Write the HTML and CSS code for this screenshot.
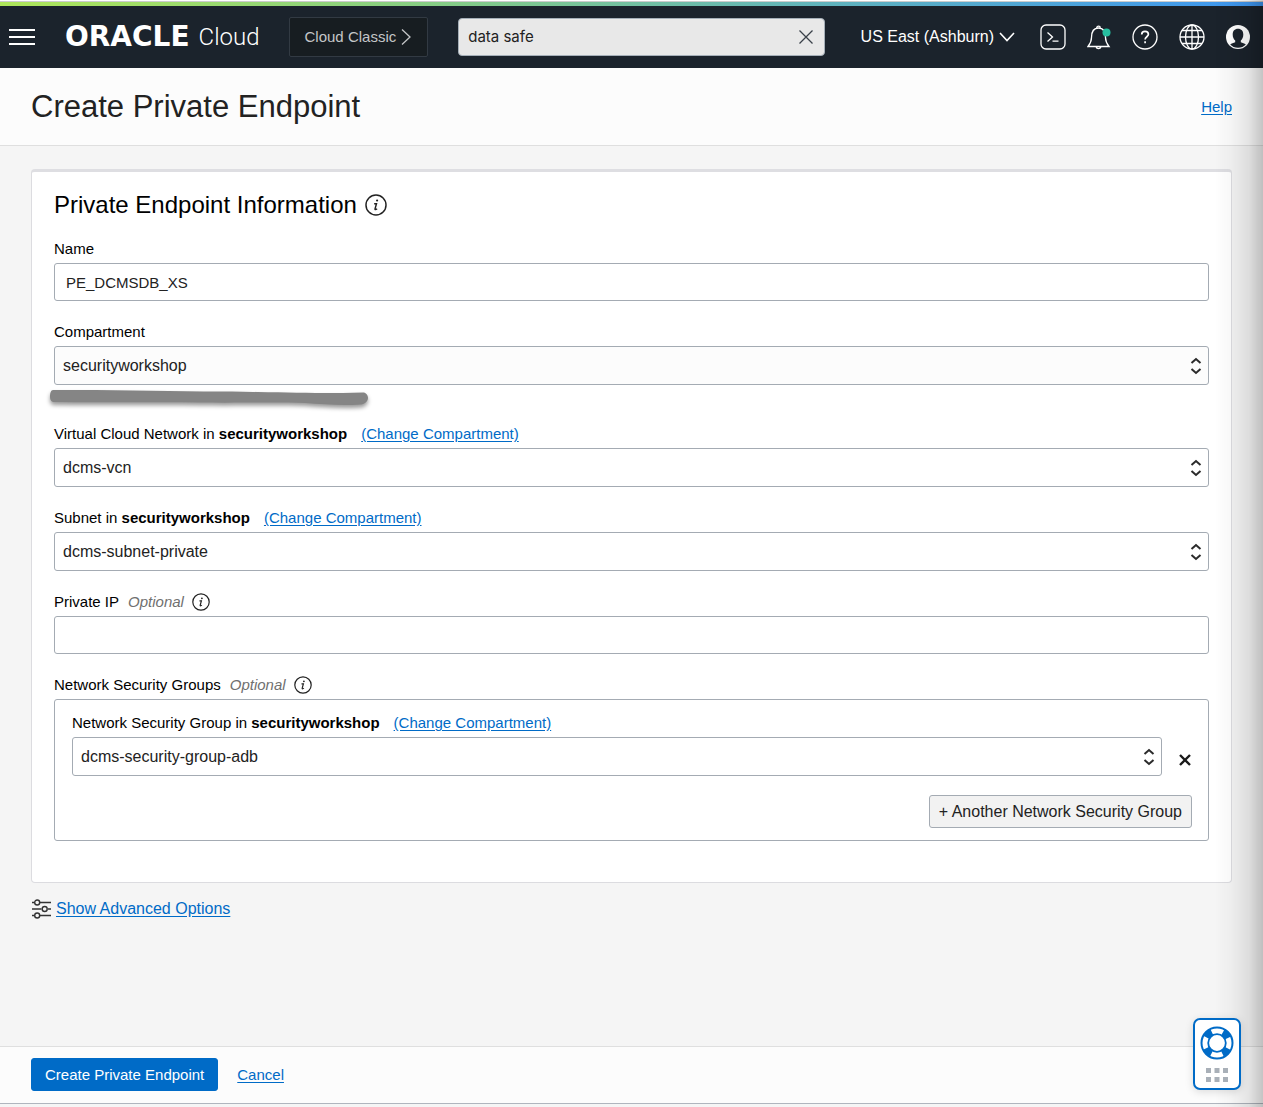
FILE: index.html
```html
<!DOCTYPE html>
<html lang="en">
<head>
<meta charset="utf-8">
<title>Create Private Endpoint</title>
<link rel="stylesheet" href="styles.css">
</head>
<body>
<header class="topbar">
  <button class="icon-btn menu" aria-label="Menu">
    <svg width="26" height="16" viewBox="0 0 26 16" stroke="#fff" stroke-width="2"><path d="M0 1h26M0 8h26M0 15h26"/></svg>
  </button>
  <a class="brand" href="#"><span class="brand-name">ORACLE</span><span class="brand-product">Cloud</span></a>
  <button class="classic">Cloud Classic
    <svg width="10" height="18" viewBox="0 0 10 18" fill="none" stroke="currentColor" stroke-width="1.3"><path d="M1 1.500L9 9l-8 7.500"/></svg>
  </button>
  <div class="search">
    <input class="search-input" type="text" value="data safe" aria-label="Search">
    <button class="icon-btn" aria-label="Clear search">
      <svg width="16" height="16" viewBox="0 0 16 16" stroke="#3a4149" stroke-width="1.300"><path d="M1.500 1.500l13 13M14.500 1.500l-13 13"/></svg>
    </button>
  </div>
  <button class="region">US East (Ashburn)
    <svg width="16" height="10" viewBox="0 0 16 10" fill="none" stroke="#fff" stroke-width="1.600"><path d="M1 1l7 7.500L15 1"/></svg>
  </button>
  <nav class="tools" aria-label="Tools">
    <button class="icon-btn" aria-label="Cloud Shell">
      <svg width="26" height="26" viewBox="0 0 26 26" fill="none" stroke="#fff" stroke-width="1.300"><rect x="1" y="1" width="24" height="24" rx="5"/><path d="M7.500 8.500l5 4.500-5 4.500M12.500 17.200h6"/></svg>
    </button>
    <button class="icon-btn" aria-label="Notifications">
      <svg width="24" height="26" viewBox="0 0 24 26" fill="none" stroke="#fff" stroke-width="1.300"><path d="M1 22.500c2-2.500 3.500-5 3.500-9 0-6 2.500-9.500 7-9.500s7 3.500 7 9.500c0 4 1.500 6.500 3.500 9zM9.700 4a1.800 1.800 0 1 1 3.600 0M9 22.700a2.600 2.600 0 0 0 5 0"/><circle cx="19.500" cy="8.500" r="4" fill="#27bfa0" stroke="none"/></svg>
    </button>
    <button class="icon-btn" aria-label="Help menu">
      <svg width="26" height="26" viewBox="0 0 26 26" fill="none" stroke="#fff"><circle cx="13" cy="13" r="12" stroke-width="1.300"/><path stroke-width="1.700" d="M9.700 10.500c0-2 1.300-3.200 3.300-3.200s3.400 1.200 3.400 3c0 2.400-3.300 2.500-3.300 5.200M13.100 17.300v1.900"/></svg>
    </button>
    <button class="icon-btn" aria-label="Language">
      <svg width="26" height="26" viewBox="0 0 26 26" fill="none" stroke="#fff" stroke-width="1.300"><circle cx="13" cy="13" r="12"/><ellipse cx="13" cy="13" rx="6.500" ry="12"/><path d="M13 1v24M1 13h24M3 6.500h20M3 19.500h20"/></svg>
    </button>
    <button class="icon-btn" aria-label="Profile">
      <svg width="24" height="24" viewBox="0 0 24 24"><circle cx="12" cy="12" r="12" fill="#fff"/><path fill="#1b232c" d="M12 3.800c-3.300 0-5.300 2.200-5.300 5.700 0 2.700 1 4.800 2.500 6v1.700c-1.700.6-3.700 1.200-5 2.300C6 21.500 8.800 22.800 12 22.800s6-1.300 7.800-3.300c-1.300-1.100-3.300-1.700-5-2.300v-1.700c1.500-1.200 2.500-3.300 2.500-6 0-3.500-2-5.700-5.300-5.700z"/></svg>
    </button>
  </nav>
</header>

<div class="page-head">
  <h1 class="page-title">Create Private Endpoint</h1>
  <a class="link" href="#">Help</a>
</div>

<main class="content">
  <form class="card" id="endpoint-form">
    <h2 class="card-title">Private Endpoint Information
      <svg width="22" height="22" viewBox="0 0 18 18" fill="none"><use href="#info"/></svg>
    </h2>

    <div class="field">
      <div class="label-row"><label for="name">Name</label></div>
      <input class="control" id="name" type="text" value="PE_DCMSDB_XS">
    </div>

    <div class="field">
      <div class="label-row"><label for="compartment">Compartment</label></div>
      <div class="select">
        <select class="control tinted" id="compartment"><option>securityworkshop</option></select>
        <svg class="arrows" width="12" height="18" viewBox="0 0 12 18"><use href="#arrows"/></svg>
      </div>
      <svg class="scribble" width="318" height="17" viewBox="0 0 318 17" aria-hidden="true">
        <path fill="#858585" d="M3 0C60-.5 120 1 170 1.500c60 .5 90 2.500 143 1 3 0 5 2.500 5 5.500s-3 6-7 6.500c-22 1.500-38-.5-56-1.500-26-1-70 0-105-.5-50-.5-95 0-145-.5-4 0-5-2-5-6 0-3 1-6 3-6z"/>
      </svg>
    </div>

    <div class="field">
      <div class="label-row"><label for="vcn">Virtual Cloud Network in <b>securityworkshop</b></label><a class="link change" href="#">(Change Compartment)</a></div>
      <div class="select">
        <select class="control" id="vcn"><option>dcms-vcn</option></select>
        <svg class="arrows" width="12" height="18" viewBox="0 0 12 18"><use href="#arrows"/></svg>
      </div>
    </div>

    <div class="field">
      <div class="label-row"><label for="subnet">Subnet in <b>securityworkshop</b></label><a class="link change" href="#">(Change Compartment)</a></div>
      <div class="select">
        <select class="control" id="subnet"><option>dcms-subnet-private</option></select>
        <svg class="arrows" width="12" height="18" viewBox="0 0 12 18"><use href="#arrows"/></svg>
      </div>
    </div>

    <div class="field">
      <div class="label-row"><label for="ip">Private IP</label><i class="optional">Optional</i>
        <svg width="18" height="18" viewBox="0 0 18 18" fill="none"><use href="#info"/></svg></div>
      <input class="control" id="ip" type="text">
    </div>

    <div class="field" role="group" aria-labelledby="groups-label">
      <div class="label-row"><span id="groups-label">Network Security Groups</span><i class="optional">Optional</i>
        <svg width="18" height="18" viewBox="0 0 18 18" fill="none"><use href="#info"/></svg></div>
      <div class="group-box">
        <div class="label-row"><label for="nsg">Network Security Group in <b>securityworkshop</b></label><a class="link change" href="#">(Change Compartment)</a></div>
        <div class="group-row">
          <div class="select">
            <select class="control" id="nsg"><option>dcms-security-group-adb</option></select>
            <svg class="arrows" width="12" height="18" viewBox="0 0 12 18"><use href="#arrows"/></svg>
          </div>
          <button class="icon-btn remove" type="button" aria-label="Remove group">
            <svg width="12" height="12" viewBox="0 0 12 12" stroke="#1a1a1a" stroke-width="2.400"><path d="M1 1l10 10M11 1L1 11"/></svg>
          </button>
        </div>
        <button class="btn add" type="button">+ Another Network Security Group</button>
      </div>
    </div>
  </form>

  <div class="advanced">
    <svg width="20" height="20" viewBox="0 0 20 20" fill="none" stroke="#333" stroke-width="1.400"><path d="M1 3.500h2.500M9 3.500h11M1 10h9.500M17 10h3M1 16.500h2.500M9 16.500h11"/><circle cx="6.200" cy="3.500" r="2.500"/><circle cx="13.700" cy="10" r="2.500"/><circle cx="6.200" cy="16.500" r="2.500"/></svg>
    <a class="link" href="#">Show Advanced Options</a>
  </div>
</main>

<footer class="actions">
  <button class="btn primary" form="endpoint-form">Create Private Endpoint</button>
  <a class="link" href="#">Cancel</a>
</footer>

<div class="edge-shade"></div>

<button class="support" aria-label="Support">
  <svg width="34" height="34" viewBox="0 0 34 34" fill="none">
    <circle cx="17" cy="17" r="12" stroke="#fff" stroke-width="7"/>
    <circle cx="17" cy="17" r="12" stroke="#006bc7" stroke-width="7" stroke-dasharray="7.540 11.310" stroke-dashoffset="-5.650"/>
    <circle cx="17" cy="17" r="15.500" stroke="#006bc7" stroke-width="2"/>
    <circle cx="17" cy="17" r="8.800" stroke="#006bc7" stroke-width="1.800"/>
  </svg>
  <svg width="22" height="14" viewBox="0 0 22 14" fill="#a9b0b8"><path d="M0 0h5v5H0zM8.500 0h5v5h-5zM17 0h5v5h-5zM0 9h5v5H0zM8.500 9h5v5h-5zM17 9h5v5h-5z"/></svg>
</button>

<svg class="defs" width="0" height="0" aria-hidden="true">
  <defs>
    <g id="info" fill="none" stroke="#222" stroke-width="1.200"><circle cx="9" cy="9" r="8.200"/><path d="M7.500 7.900h1.900L8.200 12.200c-.2.800.6.800 1.700-.1"/><circle cx="9.900" cy="5.300" r=".9" fill="#222" stroke="none"/></g>
    <g id="arrows" fill="none" stroke="#2b2b2b" stroke-width="2"><path d="M1.500 6L6 2l4.500 4M1.500 12L6 16l4.500-4"/></g>
  </defs>
</svg>
</body>
</html>
```
FILE: styles.css
```css
* { box-sizing: border-box; }

body {
  margin: 0;
  min-height: 100vh;
  display: flex;
  flex-direction: column;
  background: #f5f5f5;
  color: #000;
  font: 15px/20px "Liberation Sans", Arial, sans-serif;
}

button, input, select { font: inherit; color: inherit; }
button { cursor: pointer; }
svg { display: block; flex: none; }
.defs { position: absolute; }

.link { color: #006bc7; text-decoration: underline; text-underline-offset: 2px; }

.icon-btn {
  display: flex;
  padding: 0;
  border: 0;
  background: none;
}

/* Top bar */
.topbar {
  display: flex;
  align-items: center;
  height: 68px;
  padding: 6px 13px 0 9px;
  color: #fff;
  background:
    linear-gradient(#fff 0 1px, #ccc 1px 2px) top / 100% 2px no-repeat,
    linear-gradient(90deg, #aee65a, #86cd84 34%, #5fb2bd 66%, #3d96f2) top / 100% 6px no-repeat,
    #1b232c;
}
.brand {
  display: flex;
  align-items: center;
  gap: 9px;
  margin: 0 29px 0 30px;
  color: #fff;
  text-decoration: none;
}
.brand-name { font: bold 28px/32px "DejaVu Sans", sans-serif; }
.brand-product { font: 300 24px/32px Roboto, sans-serif; }
.classic {
  display: flex;
  align-items: center;
  gap: 5px;
  height: 40px;
  padding: 0 16px 0 15px;
  border: 1px solid #323a43;
  border-radius: 2px;
  background: #171d21;
  color: #c4c6c8;
  white-space: nowrap;
}
.search {
  display: flex;
  align-items: center;
  flex: 1;
  min-width: 0;
  height: 38px;
  margin: 0 36px 0 30px;
  padding: 0 10px 0 9px;
  border: 1px solid #a5afb8;
  border-radius: 4px;
  background: #e8e8e8;
}
.search-input {
  flex: 1;
  min-width: 0;
  padding: 0;
  border: 0;
  background: none;
  color: #222;
  font-family: Inter, sans-serif;
}
.region {
  display: flex;
  align-items: center;
  gap: 5px;
  padding: 0;
  border: 0;
  background: none;
  font-size: 16px;
  white-space: nowrap;
}
.tools {
  display: flex;
  align-items: center;
  gap: 21px;
  margin-left: 25px;
}

/* Page heading */
.page-head {
  display: flex;
  align-items: center;
  justify-content: space-between;
  padding: 19px 31px 18px;
  border-bottom: 1px solid #dfdfdf;
  background: #fcfcfc;
}
.page-title { margin: 0; font-size: 31px; line-height: 40px; font-weight: 400; color: #222; }

/* Form card */
.content { flex: 1; padding: 23px 31px 31px; }
.card {
  padding: 18px 22px 41px;
  border: 1px solid #dcdce0;
  border-top: 3px solid #dedee2;
  border-radius: 4px;
  background: #fff;
}
.card-title {
  display: flex;
  align-items: center;
  gap: 8px;
  margin: 0 0 19px;
  font-size: 24px;
  line-height: 30px;
  font-weight: 400;
}
.field + .field { margin-top: 21px; }
.label-row {
  display: flex;
  align-items: center;
  height: 20px;
  margin-bottom: 4px;
}
.optional { margin: 0 8px 0 9px; color: #707070; }
.change { margin-left: 14px; }
.control {
  display: block;
  width: 100%;
  height: 38px;
  padding: 0 11px;
  border: 1px solid #a4abb3;
  border-radius: 3px;
  background: #fff;
  color: #222;
  appearance: none;
}
.tinted { background: #fcfcfc; }
.select { display: grid; align-items: center; flex: 1; }
.select > * { grid-area: 1 / 1; }
.select .control { height: 39px; padding: 0 30px 0 8px; font-size: 16px; }
.select .tinted { background: #fcfcfc; }
.arrows { justify-self: end; margin-right: 7px; pointer-events: none; }
.scribble {
  margin: 5px 0 -4px -4px;
  overflow: visible;
  filter: drop-shadow(0 3px 2px #0006);
}
.group-box {
  padding: 13px 16px 12px 17px;
  border: 1px solid #a4abb3;
  border-radius: 3px;
}
.group-row { display: flex; align-items: center; }
.remove { margin: 6px 1px 0 17px; }
.btn {
  display: block;
  height: 33px;
  padding: 0 13px;
  border: 1px solid #a4abb3;
  border-radius: 3px;
  background: #f2f2f2;
  color: #222;
}
.add { margin: 19px 0 0 auto; padding: 0 9px; font-size: 16px; }
.primary { border-color: #006bc7; background: #006bc7; color: #fff; }

.advanced {
  display: flex;
  align-items: center;
  gap: 5px;
  margin-top: 16px;
  font-size: 16px;
}

/* Footer */
.actions {
  display: flex;
  align-items: center;
  gap: 19px;
  padding: 11px 31px 12px;
  margin-bottom: 3px;
  border-top: 1px solid #dfdfdf;
  border-bottom: 1px solid #b0b5be;
  background: #fcfcfc;
}

/* Shade along the right window edge */
.edge-shade {
  position: fixed;
  inset: 0 0 0 auto;
  width: 48px;
  background: linear-gradient(90deg, #0000, #00000008 35%, #00000018 70%, #00000038);
  pointer-events: none;
}

.support {
  position: fixed;
  right: 22px;
  bottom: 17px;
  display: flex;
  flex-direction: column;
  align-items: center;
  gap: 8px;
  width: 48px;
  height: 72px;
  padding: 6px 0;
  border: 2px solid #006bc7;
  border-radius: 7px;
  background: #fff;
  box-shadow: 0 2px 8px #0002;
}
```
